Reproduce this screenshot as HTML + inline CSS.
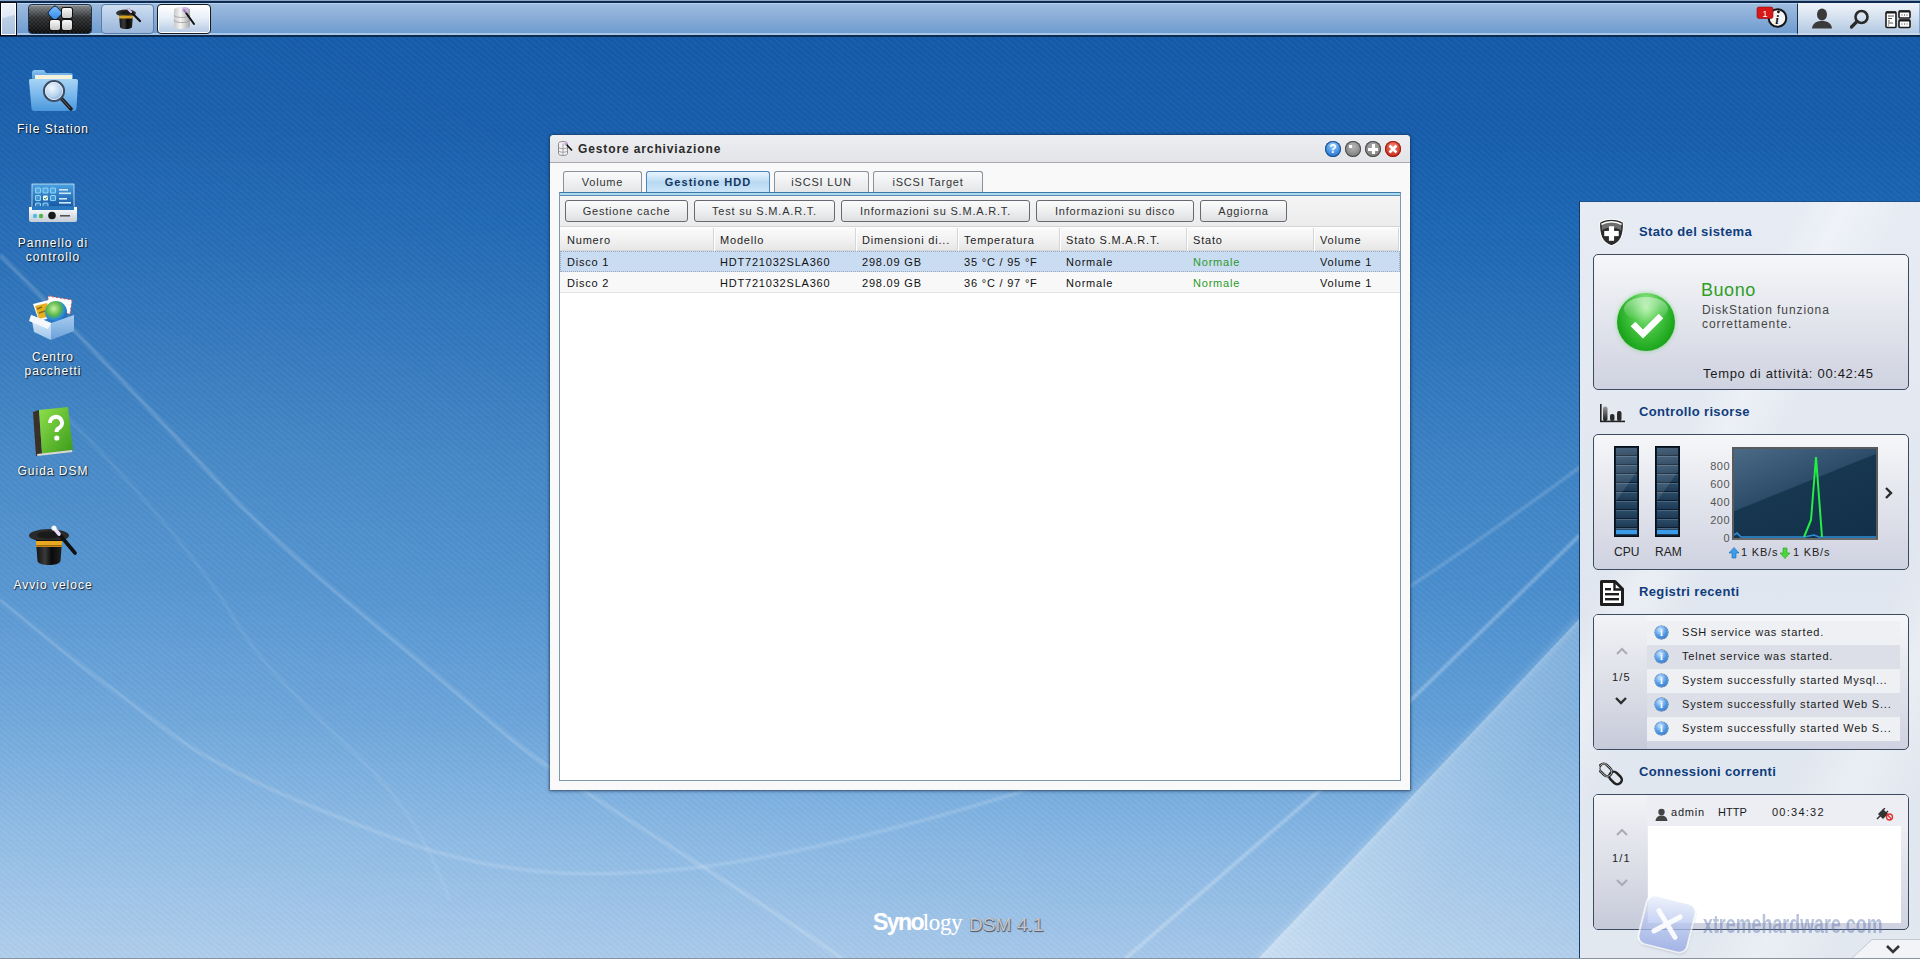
<!DOCTYPE html>
<html><head><meta charset="utf-8">
<style>
*{margin:0;padding:0;box-sizing:border-box}
html,body{width:1920px;height:959px;overflow:hidden;font-family:"Liberation Sans",sans-serif}
body{position:relative;background:#1155a5}
.a{position:absolute}
#bg{position:absolute;left:0;top:0;width:1920px;height:959px;
background:linear-gradient(180deg,#13599f 0px,#135aa9 36px,#165dac 130px,#1c66b3 220px,#2a72ba 330px,#3c82c4 460px,#4a8ece 590px,#63a0d8 720px,#86b6e3 840px,#a6c8ea 959px)}
#stripes{position:absolute;left:0;top:36px;width:1920px;height:923px;
background:repeating-linear-gradient(40deg,rgba(255,255,255,0.024) 0px,rgba(255,255,255,0.024) 2.25px,rgba(0,0,0,0.016) 2.25px,rgba(0,0,0,0.016) 4.5px)}
/* top bar */
#tb{left:0;top:0;width:1920px;height:37px;background:#0d2a50}
#tb0{left:0;top:0;width:1920px;height:1px;background:#8da3c3}
#tbm{left:0;top:3px;width:1920px;height:32px;border-top:1px solid #b8d4f0;border-bottom:2px solid #a8c8ea;
background:linear-gradient(180deg,#9dbcdf 0%,#88acd7 50%,#6e9cd0 100%)}
#tbl{left:0;top:2px;width:17px;height:34px;background:#050a14;padding:1px}
#tbl div{width:15px;height:32px;border:1.5px solid #fff;background:linear-gradient(165deg,#eef3fa 0%,#e2eaf6 40%,#bccfe6 45%,#a9c1de 100%)}
#mm{left:28px;top:4px;width:64px;height:30px;border-radius:4px;border:1px solid #1f344f;
background:linear-gradient(180deg,rgba(130,130,130,.9) 0%,rgba(40,40,40,.95) 45%,#0a0a0a 100%);
box-shadow:inset 0 1px 0 rgba(255,255,255,.25)}
#mm .ck{position:absolute;left:0;top:0;right:0;bottom:0;border-radius:3px;
background-image:linear-gradient(45deg,rgba(255,255,255,.08) 25%,transparent 25%,transparent 75%,rgba(255,255,255,.08) 75%),linear-gradient(45deg,rgba(255,255,255,.08) 25%,transparent 25%,transparent 75%,rgba(255,255,255,.08) 75%);
background-size:4px 4px;background-position:0 0,2px 2px}
.tile{position:absolute;width:10px;height:10px;border-radius:2px;background:linear-gradient(180deg,#fafafa,#c8c8c8);box-shadow:0 0 0 1px #111}
.tbtn{top:4px;height:30px;border-radius:4px;border:1px solid #5a7ca6;
background:linear-gradient(180deg,#cfdff1 0%,#b3cae6 50%,#9ab6da 100%)}
#tr{left:1797px;top:3px;width:122px;height:32px;border-left:1px solid #1a2f4f;border-top:1px solid #f0f4fa;border-bottom:2px solid #c8d8ec;
background:linear-gradient(180deg,#eef2f8 0%,#d2dfee 50%,#b3c9e3 100%)}

.t{position:absolute;white-space:nowrap;font-size:11px;line-height:11px;letter-spacing:.8px;color:#222}
#win{left:550px;top:135px;width:860px;height:655px;background:#f9f9f9;border-radius:4px 4px 0 0;
box-shadow:0 0 2px 1px rgba(30,50,80,.55),0 1px 4px rgba(20,40,70,.35)}
#wtitle{left:0;top:0;width:860px;height:28px;border-radius:4px 4px 0 0;border-bottom:1px solid #a9abae;
background:linear-gradient(180deg,#eceef1 0%,#e2e4e7 100%)}
.wb{position:absolute;top:6px;width:16px;height:16px;border-radius:50%}
.tab{position:absolute;top:36px;height:21px;border:1px solid #8a9199;border-bottom:none;border-radius:3px 3px 0 0;
background:linear-gradient(180deg,#fbfbfc 0%,#eceef0 60%,#e4e6e8 100%)}
.tab .t{top:5px;width:100%;text-align:center;color:#333}
#panel{left:9px;top:57px;width:842px;height:589px;border:1px solid #7e99ad;border-top:1px solid #3d78a6;background:#fff}
#pstrip{left:0;top:0;width:840px;height:3px;background:#a9dbf0;border-bottom:1px solid #5b8db3}
#tbar{left:0;top:3px;width:840px;height:31px;background:linear-gradient(180deg,#f4f4f4,#ececec);border-bottom:1px solid #d4d4d4}
.btn{position:absolute;top:4px;height:22px;border:1px solid #666a70;border-radius:3px;
background:linear-gradient(180deg,#fbfbfb 0%,#eeeff0 50%,#dfe0e2 100%)}
.btn .t{top:5px;width:100%;text-align:center;color:#333}
#ghead{left:0;top:35px;width:840px;height:23px;background:linear-gradient(180deg,#fbfbfb 0%,#f0f0f0 60%,#e6e6e6 100%);border-bottom:1px solid #d9d9d9}
.gsep{position:absolute;top:0;width:1px;height:23px;background:#d6d6d6;box-shadow:1px 0 0 #fff}
.row{position:absolute;left:0;width:840px;height:21px}

#wp{left:1579px;top:201px;width:341px;height:758px;border-left:1px solid #173a66;border-top:1px solid #1d4f8a;
background:linear-gradient(118deg,rgba(255,255,255,0) 30%,rgba(255,255,255,.35) 36%,rgba(255,255,255,0) 44%,rgba(255,255,255,0) 70%,rgba(255,255,255,.3) 78%,rgba(255,255,255,0) 88%),linear-gradient(180deg,#e7ecf4 0%,#e0e6ef 50%,#e2e8f0 100%)}
.wh{position:absolute;left:59px;font-size:13px;line-height:13px;font-weight:bold;color:#0f3c7c;letter-spacing:.36px;white-space:nowrap}
.wbox{position:absolute;left:13px;width:316px;height:136px;border:1px solid #3c4b60;border-radius:5px;
background:linear-gradient(180deg,#f6f7f9 0%,#e6e8ef 40%,#cfd2e0 100%);overflow:hidden}
.bar{position:absolute;top:11px;width:25px;height:91px;background:#0c1d2e;border:1px solid #080f18}
.bar .in{position:absolute;left:1px;top:1px;width:21px;height:87px;
background:repeating-linear-gradient(180deg,#2a4a66 0px,#1d3a55 7px,#0e1e2e 7px,#0e1e2e 8px,#4a6680 8px,#4a6680 9px)}
.bar .gl{position:absolute;left:1px;top:1px;width:21px;height:87px;background:linear-gradient(125deg,rgba(255,255,255,.14) 0%,rgba(255,255,255,.10) 45%,rgba(255,255,255,0) 46%)}
.bar .lv{position:absolute;left:1px;bottom:2px;width:21px;height:4px;background:#3b9be8}
.lg{position:absolute;height:24px;left:53px;width:253px}
.ico{position:absolute;left:8px;top:5px;width:13px;height:13px;border-radius:50%;
background:radial-gradient(circle at 40% 30%,#cfe6ff 0%,#5aa2ea 45%,#1f63b8 100%);box-shadow:0 0 0 .5px #2f5f9a}
.ico:after{content:"i";position:absolute;left:0;top:1px;width:13px;text-align:center;font:bold 10px/11px "Liberation Serif",serif;color:#fff}
.lg .t{left:35px;top:6px;color:#1a1a1a}

.dl{position:absolute;width:106px;left:0;text-align:center;color:#fff;font-size:12px;line-height:14px;letter-spacing:1px;white-space:nowrap;
text-shadow:1px 1px 1px rgba(0,0,0,.75),0 0 2px rgba(0,0,0,.35)}
</style></head><body>
<div id="bg"></div>
<svg id="bgsvg" class="a" style="left:0;top:0" width="1920" height="959" viewBox="0 0 1920 959">
 <defs>
  <linearGradient id="rdark" x1="0" y1="0" x2="1" y2="0">
   <stop offset="0" stop-color="#0a3a80" stop-opacity="0"/><stop offset=".55" stop-color="#0a3a80" stop-opacity="0.0"/><stop offset="1" stop-color="#0a3a80" stop-opacity="0.22"/>
  </linearGradient>
  <radialGradient id="lglow" cx="0" cy="959" r="1100" gradientUnits="userSpaceOnUse">
   <stop offset="0" stop-color="#ffffff" stop-opacity=".12"/><stop offset="1" stop-color="#ffffff" stop-opacity="0"/>
  </radialGradient>
  <linearGradient id="wedge" x1="1258" y1="959" x2="1520" y2="1140" gradientUnits="userSpaceOnUse">
   <stop offset="0" stop-color="#ffffff" stop-opacity=".4"/><stop offset=".35" stop-color="#ffffff" stop-opacity=".22"/><stop offset="1" stop-color="#ffffff" stop-opacity=".1"/>
  </linearGradient>
  <radialGradient id="rglow" cx="1480" cy="680" r="420" gradientUnits="userSpaceOnUse"><stop offset="0" stop-color="#ffffff" stop-opacity=".12"/><stop offset="1" stop-color="#ffffff" stop-opacity="0"/></radialGradient>
  <filter id="bl1" x="-10%" y="-10%" width="120%" height="120%"><feGaussianBlur stdDeviation="1.2"/></filter>
  <filter id="bl3" x="-10%" y="-10%" width="120%" height="120%"><feGaussianBlur stdDeviation="3"/></filter>
 </defs>
 
 <rect x="0" y="36" width="1920" height="923" fill="url(#lglow)"/>
 <path d="M1258 959L1503 700L1580 618L1920 330V959Z" fill="url(#wedge)"/>
 <g fill="none" stroke="#ffffff" filter="url(#bl1)">
  <path id="arcA" d="M0 255C80 335 160 420 235 500C300 565 370 620 433 673C480 712 515 745 550 768C640 830 760 900 843 959" stroke-opacity=".2" stroke-width="3.2"/>
  <path d="M0 600C35 628 70 658 100 680C135 705 170 735 200 753C240 775 270 790 306 804C350 822 400 842 440 853C480 864 520 871 560 873C610 875 660 872 702 867C810 852 930 820 1017 793C1200 730 1400 600 1580 467" stroke-opacity=".18" stroke-width="3"/>
  <path d="M1125 959L1320 790L1410 701L1580 535" stroke-opacity=".28" stroke-width="3.5"/>
  <path d="M60 410C130 480 200 560 235 620S340 735 377 776S430 850 450 900" stroke-opacity=".1" stroke-width="2.5"/>
 </g>
 <path d="M1258 959L1503 700L1580 618" fill="none" stroke="#ffffff" stroke-opacity=".3" stroke-width="3" filter="url(#bl3)"/>
</svg>
<div id="stripes"></div>

<!-- desktop icons -->
<svg class="a" style="left:28px;top:66px" width="52" height="48" viewBox="0 0 52 48">
 <defs>
  <linearGradient id="fg1" x1="0" y1="0" x2="0" y2="1"><stop offset="0" stop-color="#8cc4f0"/><stop offset="1" stop-color="#3d8fd8"/></linearGradient>
  <linearGradient id="fg2" x1="0" y1="0" x2="0" y2="1"><stop offset="0" stop-color="#a8d4f6"/><stop offset=".5" stop-color="#7ab8ec"/><stop offset="1" stop-color="#4a98dc"/></linearGradient>
  <radialGradient id="lens" cx=".4" cy=".35" r=".7"><stop offset="0" stop-color="#f4f8ff"/><stop offset=".6" stop-color="#b8d4ee"/><stop offset="1" stop-color="#6d9bc8"/></radialGradient>
 </defs>
 <path d="M6 4h10l2 3h24a3 3 0 0 1 3 3v6H4V7a3 3 0 0 1 2-3z" fill="url(#fg1)"/>
 <rect x="7" y="9" width="37" height="6" fill="#f4f1dc"/>
 <path d="M2 13h46a2 2 0 0 1 2 2l-1.5 27a3 3 0 0 1-3 3H6.5a3 3 0 0 1-3-3L1 15a2 2 0 0 1 1-2z" fill="url(#fg2)"/>
 <path d="M33 32l10 11" stroke="#1b1b1b" stroke-width="3.6" stroke-linecap="round"/>
 <path d="M33 32l9 10" stroke="#6a6a6a" stroke-width="1" stroke-linecap="round"/>
 <circle cx="26" cy="25" r="10" fill="url(#lens)" stroke="#3c4f66" stroke-width="2.2"/>
 <circle cx="26" cy="25" r="8.5" fill="none" stroke="#e8eef6" stroke-width="1"/>
</svg>
<div class="dl" style="top:122px">File Station</div>

<svg class="a" style="left:28px;top:183px" width="50" height="40" viewBox="0 0 50 40">
 <defs>
  <linearGradient id="pg1" x1="0" y1="0" x2="0" y2="1"><stop offset="0" stop-color="#4aa2e2"/><stop offset=".6" stop-color="#1f66b0"/><stop offset="1" stop-color="#0e3f7e"/></linearGradient>
  <linearGradient id="pg2" x1="0" y1="0" x2="0" y2="1"><stop offset="0" stop-color="#ffffff"/><stop offset="1" stop-color="#c4ccd6"/></linearGradient>
 </defs>
 <rect x="4" y="1" width="42" height="31" fill="url(#pg1)" stroke="#cfe6f8" stroke-width=".8"/>
 <g fill="rgba(120,210,250,.35)" stroke="#8fd4f6" stroke-width="1.1">
  <rect x="7.5" y="5" width="5" height="5" rx="1"/><rect x="15" y="5" width="5" height="5" rx="1"/><rect x="22.5" y="5" width="5" height="5" rx="1"/>
  <rect x="7.5" y="12.5" width="5" height="5" rx="1"/><rect x="22.5" y="12.5" width="5" height="5" rx="1"/>
  <rect x="7.5" y="20" width="5" height="5" rx="1"/><rect x="15" y="20" width="5" height="5" rx="1"/>
 </g>
 <rect x="15" y="12.5" width="5" height="5" rx="1" fill="#e8f4fc"/>
 <path d="M16 15l1.3 1.3 2-2.5" stroke="#2a9a3a" stroke-width="1" fill="none"/>
 <g fill="#cfe8f8"><rect x="31" y="6" width="9" height="1.6"/><rect x="31" y="9.5" width="12" height="1.6"/><rect x="31" y="15" width="8" height="1.6"/><rect x="31" y="19" width="12" height="1.6"/><rect x="31" y="23" width="9" height="1.6"/></g>
 <path d="M1 24h48v13a2 2 0 0 1-2 2H3a2 2 0 0 1-2-2z" fill="url(#pg2)"/>
 <rect x="4" y="23" width="42" height="4" fill="#2a78c0"/>
 <circle cx="7" cy="33" r="2.2" fill="#5ab8e8"/><circle cx="13" cy="33" r="2.2" fill="#4cb848"/>
 <circle cx="24" cy="32.5" r="3.8" fill="#1a1a1a"/>
 <rect x="32" y="32" width="10" height="1.6" fill="#555"/>
</svg>
<div class="dl" style="top:236px">Pannello di<br>controllo</div>

<svg class="a" style="left:29px;top:293px" width="48" height="48" viewBox="0 0 48 48">
 <defs>
  <radialGradient id="globe" cx=".4" cy=".35" r=".7"><stop offset="0" stop-color="#c8f0a0"/><stop offset=".45" stop-color="#5ab84a"/><stop offset=".7" stop-color="#2a8ad8"/><stop offset="1" stop-color="#1a5aa8"/></radialGradient>
  <linearGradient id="box1" x1="0" y1="0" x2="0" y2="1"><stop offset="0" stop-color="#e8f2fc"/><stop offset="1" stop-color="#9cc4ea"/></linearGradient>
  <linearGradient id="box2" x1="0" y1="0" x2="0" y2="1"><stop offset="0" stop-color="#a8cdf0"/><stop offset="1" stop-color="#6aa0d8"/></linearGradient>
 </defs>
 <path d="M19 3l24 4-2 14-22-3z" fill="#fff" stroke="#e05050" stroke-width="1" stroke-dasharray="2 2"/>
 <path d="M4 11l16-4 5 17-15 4z" fill="#fff"/>
 <path d="M6 13l12-3 4 13-12 3z" fill="#e8b020"/>
 <path d="M8 16l5-2M10 20l6-2" stroke="#8a6a10" stroke-width="1.5"/>
 <circle cx="27" cy="19" r="11" fill="url(#globe)"/>
 <path d="M2 22l20 8v17L5 39z" fill="url(#box1)"/>
 <path d="M22 30l23-8v16l-23 9z" fill="url(#box2)"/>
 <path d="M2 22l20 8-3 6L0 28z" fill="#f4f8fc"/>
</svg>
<div class="dl" style="top:350px">Centro<br>pacchetti</div>

<svg class="a" style="left:31px;top:406px" width="44" height="50" viewBox="0 0 44 50">
 <defs><linearGradient id="bk" x1="0" y1="0" x2="1" y2="1"><stop offset="0" stop-color="#8ee04a"/><stop offset="1" stop-color="#3a9a1a"/></linearGradient></defs>
 <path d="M2 6l6-2 3 44-6 2z" fill="#3a3028"/>
 <path d="M8 4l29-3 5 43-31 4z" fill="url(#bk)"/>
 <path d="M6 48l35-4 .5 2L6.5 50z" fill="#d8d8d0"/>
 <path d="M19 17a6 6 0 1 1 9 5c-2 1-2.5 2-2.5 4" fill="none" stroke="#fff" stroke-width="4"/>
 <circle cx="25.8" cy="32" r="2.6" fill="#fff"/>
</svg>
<div class="dl" style="top:464px">Guida DSM</div>

<svg class="a" style="left:28px;top:525px" width="50" height="42" viewBox="0 0 50 42">
 <defs>
  <linearGradient id="hat" x1="0" y1="0" x2="1" y2="0"><stop offset="0" stop-color="#111"/><stop offset=".35" stop-color="#3a3a3a"/><stop offset=".6" stop-color="#0a0a0a"/><stop offset="1" stop-color="#222"/></linearGradient>
 </defs>
 <ellipse cx="21" cy="10.5" rx="20" ry="6.5" fill="#2a2a2a"/>
 <ellipse cx="21" cy="10" rx="12" ry="3.5" fill="#1a1a1a"/>
 <path d="M8 15h26v2H8z" fill="#111"/>
 <path d="M8 16h26l-1.5 20c-1 3-6 4-11.5 4s-10.5-1-11.5-4z" fill="url(#hat)"/>
 <rect x="8" y="16" width="26" height="6" fill="#e8a820"/>
 <rect x="8" y="20" width="26" height="1.5" fill="#a06a10"/>
 <path d="M26 3l21 25" stroke="#111" stroke-width="3.6" stroke-linecap="round"/>
 <path d="M26 3l5 6" stroke="#e8e0f8" stroke-width="3.6" stroke-linecap="round"/>
 <circle cx="26" cy="3" r="2.6" fill="#fff" opacity=".85"/>
</svg>
<div class="dl" style="top:578px">Avvio veloce</div>
<div id="tb" class="a"></div>
<div id="tb0" class="a"></div>
<div id="tbm" class="a"></div>
<div id="tbl" class="a"><div></div></div>
<div id="mm" class="a"><div class="ck"></div>
  <div class="tile" style="left:21px;top:3px;width:10px;height:10px;transform:rotate(45deg);background:linear-gradient(135deg,#7cc0ff,#2f86e8);box-shadow:0 0 0 1px #0c2a55"></div>
  <div class="tile" style="left:33px;top:3px"></div>
  <div class="tile" style="left:21px;top:15px"></div>
  <div class="tile" style="left:33px;top:15px"></div>
</div>
<div class="a tbtn" style="left:101px;width:53px"></div>
<div class="a tbtn" style="left:157px;width:54px;border:1.5px solid #161a22;box-shadow:inset 0 0 0 1px #fff;background:linear-gradient(180deg,#ffffff 0%,#e8eff8 45%,#b5cae4 100%)"></div>
<div id="tr" class="a"></div>

<div id="win" class="a">
 <div id="wtitle" class="a">
  <svg class="a" style="left:7px;top:5px" width="18" height="17" viewBox="0 0 18 17">
   <path d="M1.5 3.5c0-1.2 2-2 4.5-2s4.5.8 4.5 2v10c0 1.2-2 2-4.5 2s-4.5-.8-4.5-2z" fill="#f2f2f2" stroke="#8a8a8a" stroke-width="1"/>
   <path d="M1.5 7c0 1 2 1.7 4.5 1.7S10.5 8 10.5 7M1.5 10.5c0 1 2 1.7 4.5 1.7s4.5-.7 4.5-1.7M6 3.5v12" fill="none" stroke="#9a9a9a" stroke-width=".9"/>
   <path d="M8.5 3.5l6.5 7" stroke="#111" stroke-width="1.6"/>
   <circle cx="8.5" cy="3.5" r="2" fill="#e0b0f8" opacity=".7"/>
  </svg>
  <div class="t" style="left:28px;top:9px;font-weight:bold;font-size:12px;letter-spacing:.88px;color:#2a2a2a">Gestore archiviazione</div>
  <div class="wb" style="left:775px;background:radial-gradient(circle at 50% 30%,#9fd0ff 0%,#3f8ee0 55%,#1a5aa8 100%);box-shadow:inset 0 0 0 1px #1c4f8a"><div class="t" style="left:0;top:3px;width:16px;text-align:center;color:#fff;font-weight:bold;font-size:12px;letter-spacing:0">?</div></div>
  <div class="wb" style="left:795px;background:radial-gradient(circle at 50% 35%,#b8b8b8 0%,#8a8a8a 60%,#5a5a5a 100%);box-shadow:inset 0 0 0 1px #4a4a4a"><div class="a" style="left:4px;top:4px;width:3px;height:3px;background:#fff"></div></div>
  <div class="wb" style="left:815px;background:radial-gradient(circle at 50% 35%,#b0b0b0 0%,#888 60%,#555 100%);box-shadow:inset 0 0 0 1px #4a4a4a">
   <div class="a" style="left:3px;top:6.5px;width:10px;height:3px;background:#fff"></div><div class="a" style="left:6.5px;top:3px;width:3px;height:10px;background:#fff"></div></div>
  <div class="wb" style="left:835px;background:radial-gradient(circle at 50% 35%,#f08a7a 0%,#d23a2a 60%,#a81a10 100%);box-shadow:inset 0 0 0 1px #9a1a10">
   <svg class="a" style="left:0;top:0" width="16" height="16"><path d="M4.5 4.5l7 7M11.5 4.5l-7 7" stroke="#fff" stroke-width="2.6"/></svg></div>
 </div>
 <div class="tab" style="left:13px;width:79px"><div class="t">Volume</div></div>
 <div class="tab" style="left:96px;width:124px;border-color:#4a86b8;background:linear-gradient(180deg,#eaf4fc 0%,#b9d9f3 50%,#cfe6f8 100%);height:22px"><div class="t" style="font-weight:bold;letter-spacing:1.05px;color:#15375e">Gestione HDD</div></div>
 <div class="tab" style="left:224px;width:95px"><div class="t">iSCSI LUN</div></div>
 <div class="tab" style="left:323px;width:110px"><div class="t">iSCSI Target</div></div>
 <div id="panel" class="a">
  <div id="pstrip" class="a"></div>
  <div id="tbar" class="a">
   <div class="btn" style="left:5px;width:123px"><div class="t">Gestione cache</div></div>
   <div class="btn" style="left:134px;width:141px"><div class="t">Test su S.M.A.R.T.</div></div>
   <div class="btn" style="left:281px;width:189px"><div class="t">Informazioni su S.M.A.R.T.</div></div>
   <div class="btn" style="left:476px;width:158px"><div class="t">Informazioni su disco</div></div>
   <div class="btn" style="left:640px;width:87px"><div class="t">Aggiorna</div></div>
  </div>
  <div id="ghead" class="a">
   <div class="t" style="left:7px;top:7px">Numero</div>
   <div class="gsep" style="left:153px"></div>
   <div class="t" style="left:160px;top:7px">Modello</div>
   <div class="gsep" style="left:295px"></div>
   <div class="t" style="left:302px;top:7px">Dimensioni di...</div>
   <div class="gsep" style="left:397px"></div>
   <div class="t" style="left:404px;top:7px">Temperatura</div>
   <div class="gsep" style="left:499px"></div>
   <div class="t" style="left:506px;top:7px">Stato S.M.A.R.T.</div>
   <div class="gsep" style="left:626px"></div>
   <div class="t" style="left:633px;top:7px">Stato</div>
   <div class="gsep" style="left:753px"></div>
   <div class="t" style="left:760px;top:7px">Volume</div>
   <div class="gsep" style="left:838px"></div>
  </div>
  <div class="row" style="top:58px;background:#cadcf2;border:1px dotted #9aa8b8"></div>
  <div class="row" style="top:79px;background:#f8f8f8;border-bottom:1px solid #e4e4e4"></div>
  <div class="t" style="left:7px;top:64px;color:#111">Disco 1</div>
  <div class="t" style="left:160px;top:64px;color:#111">HDT721032SLA360</div>
  <div class="t" style="left:302px;top:64px;color:#111">298.09 GB</div>
  <div class="t" style="left:404px;top:64px;color:#111">35 °C / 95 °F</div>
  <div class="t" style="left:506px;top:64px;color:#111">Normale</div>
  <div class="t" style="left:633px;top:64px;color:#2a9a2a">Normale</div>
  <div class="t" style="left:760px;top:64px;color:#111">Volume 1</div>
  <div class="t" style="left:7px;top:85px;color:#111">Disco 2</div>
  <div class="t" style="left:160px;top:85px;color:#111">HDT721032SLA360</div>
  <div class="t" style="left:302px;top:85px;color:#111">298.09 GB</div>
  <div class="t" style="left:404px;top:85px;color:#111">36 °C / 97 °F</div>
  <div class="t" style="left:506px;top:85px;color:#111">Normale</div>
  <div class="t" style="left:633px;top:85px;color:#2a9a2a">Normale</div>
  <div class="t" style="left:760px;top:85px;color:#111">Volume 1</div>
 </div>
</div>

<div id="wp" class="a">
 <!-- Stato del sistema -->
 <svg class="a" style="left:18px;top:16px" width="27" height="29" viewBox="0 0 26 28">
  <path d="M13 1.2C8 1.2 4 2.6 1.5 4.3C1.2 16 3.5 23.5 13 26.8C22.5 23.5 24.8 16 24.5 4.3C22 2.6 18 1.2 13 1.2Z" fill="#2c2c2c" stroke="#fff" stroke-width="1"/>
  <path d="M3.5 6C6 4.3 9.5 3.4 13 3.4S20 4.3 22.5 6L22.3 12C19 10 16 9.5 13 9.5S6 10 3.7 12Z" fill="#8a8a8a" opacity=".7"/>
  <path d="M3.2 6.2C6 4.4 9.5 3.6 13 3.6S20 4.4 22.8 6.2" fill="none" stroke="#fff" stroke-width="1.4"/>
  <rect x="10.5" y="8" width="5" height="14" fill="#fff"/><rect x="6" y="12.5" width="14" height="5" fill="#fff"/>
 </svg>
 <div class="wh" style="top:23px">Stato del sistema</div>
 <div class="wbox" style="top:52px">
  <div class="a" style="left:22px;top:37px;width:60px;height:60px;border-radius:50%;background:radial-gradient(circle at 50% 50%,rgba(120,230,120,.35) 0%,rgba(120,230,120,0) 70%)"></div>
  <div class="a" style="left:23px;top:38px;width:58px;height:58px;border-radius:50%;
   background:radial-gradient(ellipse at 50% 25%,#a8f0a0 0%,#4cc848 35%,#1ea81e 70%,#138a13 100%);box-shadow:0 0 4px rgba(60,200,60,.5)"></div>
  <div class="a" style="left:30px;top:42px;width:44px;height:24px;border-radius:50%;background:linear-gradient(180deg,rgba(255,255,255,.45),rgba(255,255,255,0))"></div>
  <svg class="a" style="left:23px;top:38px" width="58" height="58"><path d="M16 31l10 10 18-18" fill="none" stroke="#fff" stroke-width="6.5"/></svg>
  <div class="t" style="left:107px;top:26px;font-size:18px;line-height:18px;color:#2e9e26;letter-spacing:.55px">Buono</div>
  <div class="t" style="left:108px;top:49px;font-size:12px;line-height:12px;color:#454545;letter-spacing:.92px">DiskStation funziona</div>
  <div class="t" style="left:108px;top:63px;font-size:12px;line-height:12px;color:#454545;letter-spacing:.92px">correttamente.</div>
  <div class="t" style="left:109px;top:112px;font-size:13px;line-height:13px;color:#1c1c1c;letter-spacing:.7px">Tempo di attività: 00:42:45</div>
 </div>
 <!-- Controllo risorse -->
 <svg class="a" style="left:19px;top:201px" width="27" height="20" viewBox="0 0 27 20">
  <defs><linearGradient id="cg" x1="0" y1="0" x2="0" y2="1"><stop offset="0" stop-color="#9a9a9a"/><stop offset="1" stop-color="#1a1a1a"/></linearGradient></defs>
  <rect x="1" y="1" width="1.6" height="18" fill="#222"/><rect x="1" y="17.6" width="25" height="1.6" fill="#222"/>
  <rect x="4" y="3.5" width="4.5" height="14.5" rx="2" fill="url(#cg)"/>
  <rect x="11" y="11" width="4.5" height="7" rx="2" fill="#2a2a2a"/>
  <rect x="18" y="8" width="4.5" height="10" rx="2" fill="#2a2a2a"/>
 </svg>
 <div class="wh" style="top:203px">Controllo risorse</div>
 <div class="wbox" style="top:232px">
  <div class="bar" style="left:20px"><div class="in"></div><div class="gl"></div><div class="lv"></div></div>
  <div class="bar" style="left:61px"><div class="in"></div><div class="gl"></div><div class="lv"></div></div>
  <div class="t" style="left:20px;top:111px;font-size:12px;line-height:12px;letter-spacing:0;color:#222">CPU</div>
  <div class="t" style="left:61px;top:111px;font-size:12px;line-height:12px;letter-spacing:0;color:#222">RAM</div>
  <div class="t" style="left:91px;top:26px;width:45px;text-align:right;font-size:11px;line-height:10px;letter-spacing:.5px;color:#555">800</div>
  <div class="t" style="left:91px;top:44px;width:45px;text-align:right;font-size:11px;line-height:10px;letter-spacing:.5px;color:#555">600</div>
  <div class="t" style="left:91px;top:62px;width:45px;text-align:right;font-size:11px;line-height:10px;letter-spacing:.5px;color:#555">400</div>
  <div class="t" style="left:91px;top:80px;width:45px;text-align:right;font-size:11px;line-height:10px;letter-spacing:.5px;color:#555">200</div>
  <div class="t" style="left:91px;top:98px;width:45px;text-align:right;font-size:11px;line-height:10px;letter-spacing:.5px;color:#555">0</div>
  <div class="a" style="left:138px;top:12px;width:146px;height:93px;background:#4a4f55;border:2px solid #5a5a5a;border-bottom-color:#6a6a6a">
   <div class="a" style="left:0;top:0;width:142px;height:89px;background:linear-gradient(158deg,#4a6a86 0%,#2c4c6a 42%,#17364f 43%,#12304a 100%)"></div>
   <svg class="a" style="left:0;top:0" width="142" height="89">
    <path d="M0 86 L3 84 L7 88 L10 88 L70 88 L75 87 L80 86 L85 88 L142 88" fill="none" stroke="#2e8fd8" stroke-width="1.6"/>
    <path d="M70 88 L77 71 L82 8 L88 88" fill="none" stroke="#22ee44" stroke-width="2"/>
   </svg>
  </div>
  <svg class="a" style="left:290px;top:51px" width="10" height="14"><path d="M2 2l5 5-5 5" fill="none" stroke="#2a2a2a" stroke-width="2.4"/></svg>
  <svg class="a" style="left:134px;top:112px" width="12" height="12"><path d="M6 0.5L11 6H8V11H4V6H1Z" fill="#3a9ee8" stroke="#1c6ab0" stroke-width=".6"/></svg>
  <div class="t" style="left:147px;top:112px;font-size:11px;letter-spacing:.8px;color:#222">1 KB/s</div>
  <svg class="a" style="left:185px;top:112px" width="12" height="12"><path d="M6 11.5L11 6H8V1H4V6H1Z" fill="#4ad838" stroke="#24a020" stroke-width=".6"/></svg>
  <div class="t" style="left:199px;top:112px;font-size:11px;letter-spacing:.8px;color:#222">1 KB/s</div>
 </div>
 <!-- Registri recenti -->
 <svg class="a" style="left:19px;top:377px" width="26" height="28" viewBox="0 0 26 28">
  <path d="M2.5 2.5H16L23.5 10V25.5H2.5Z" fill="#fff" stroke="#1e1e1e" stroke-width="3" stroke-linejoin="round"/>
  <path d="M15.5 2.5V10.5H23.5" fill="none" stroke="#1e1e1e" stroke-width="2.4"/>
  <rect x="6" y="9" width="6" height="2.4" fill="#1e1e1e"/><rect x="6" y="14" width="14" height="2.4" fill="#1e1e1e"/><rect x="6" y="19" width="14" height="2.4" fill="#1e1e1e"/>
 </svg>
 <div class="wh" style="top:383px">Registri recenti</div>
 <div class="wbox" style="top:412px">
  <div class="a" style="left:0;top:0;width:53px;height:136px;background:linear-gradient(180deg,#f2f3f6 0%,#d9dbe5 60%,#c6c9d9 100%)"></div>
  <svg class="a" style="left:21px;top:32px" width="14" height="9"><path d="M2 7l5-5 5 5" fill="none" stroke="#a9acb4" stroke-width="2"/></svg>
  <div class="t" style="left:18px;top:57px;color:#222;letter-spacing:1.2px">1/5</div>
  <svg class="a" style="left:20px;top:81px" width="14" height="9"><path d="M2 2l5 5 5-5" fill="none" stroke="#2e2e2e" stroke-width="2.4"/></svg>
  <div class="lg" style="top:6px;background:#eef0f4"><div class="ico"></div><div class="t">SSH service was started.</div></div>
  <div class="lg" style="top:30px;background:#dcdfe7"><div class="ico"></div><div class="t">Telnet service was started.</div></div>
  <div class="lg" style="top:54px;background:#eef0f4"><div class="ico"></div><div class="t">System successfully started Mysql...</div></div>
  <div class="lg" style="top:78px;background:#dcdfe7"><div class="ico"></div><div class="t">System successfully started Web S...</div></div>
  <div class="lg" style="top:102px;background:#eef0f4"><div class="ico"></div><div class="t">System successfully started Web S...</div></div>
 </div>
 <!-- Connessioni correnti -->
 <svg class="a" style="left:19px;top:558px" width="26" height="28" viewBox="0 0 26 28">
  <g fill="none" stroke="#222" stroke-width="2.6"><rect x="2" y="3" width="9" height="14" rx="4.5" transform="rotate(-45 6.5 10)"/><rect x="12" y="11" width="9" height="14" rx="4.5" transform="rotate(-45 16.5 18)"/></g>
  <g fill="none" stroke="#fff" stroke-width=".8" opacity=".8"><rect x="2" y="3" width="9" height="14" rx="4.5" transform="rotate(-45 6.5 10)"/></g>
 </svg>
 <div class="wh" style="top:563px">Connessioni correnti</div>
 <div class="wbox" style="top:592px">
  <div class="a" style="left:0;top:0;width:53px;height:136px;background:linear-gradient(180deg,#f2f3f6 0%,#d9dbe5 60%,#c6c9d9 100%)"></div>
  <div class="a" style="left:53px;top:0;width:263px;height:31px;background:#eceef3"></div>
  <div class="a" style="left:54px;top:31px;width:253px;height:97px;background:#fff"></div>
  <svg class="a" style="left:21px;top:33px" width="14" height="9"><path d="M2 7l5-5 5 5" fill="none" stroke="#a9acb4" stroke-width="2"/></svg>
  <div class="t" style="left:18px;top:58px;color:#222;letter-spacing:1.2px">1/1</div>
  <svg class="a" style="left:21px;top:83px" width="14" height="9"><path d="M2 2l5 5 5-5" fill="none" stroke="#a9acb4" stroke-width="2"/></svg>
  <svg class="a" style="left:61px;top:13px" width="13" height="13" viewBox="0 0 13 13"><circle cx="6.5" cy="4" r="3.2" fill="#444"/><path d="M0.5 13C1 9 3.5 7.5 6.5 7.5S12 9 12.5 13Z" fill="#444"/></svg>
  <div class="t" style="left:77px;top:12px;color:#1a1a1a">admin</div>
  <div class="t" style="left:124px;top:12px;color:#1a1a1a;letter-spacing:0">HTTP</div>
  <div class="t" style="left:178px;top:12px;color:#1a1a1a;letter-spacing:1.25px">00:34:32</div>
  <svg class="a" style="left:282px;top:13px" width="18" height="13" viewBox="0 0 18 13"><path d="M1 11l3-3M3 6l4-4 4 4-4 4Z" fill="#333" stroke="#333" stroke-width="1.5"/><path d="M7 2l2-2M10 5l2-2" stroke="#333" stroke-width="1.3"/><circle cx="13.5" cy="9" r="3" fill="none" stroke="#e03030" stroke-width="1.3"/><path d="M11.5 7l4 4" stroke="#e03030" stroke-width="1.2"/></svg>
 </div>
 <!-- bottom tab -->
 <svg class="a" style="left:0;top:736px" width="341" height="22" viewBox="0 0 341 22">
  <path d="M270 22L292 1.5H341V22Z" fill="#f2f4f8" stroke="none"/>
  <path d="M270 22L292 1.5H341" fill="none" stroke="#c4c8d0" stroke-width="1"/>
  <path d="M307 8l6 6 6-6" fill="none" stroke="#333" stroke-width="2.6"/>
 </svg>
 <div class="a" style="left:0;top:756px;width:341px;height:2px;background:#8a94a4"></div>
</div>

<!-- taskbar icons -->
<svg class="a" style="left:114px;top:7px" width="28" height="24" viewBox="0 0 28 24">
 <defs><linearGradient id="hat2" x1="0" y1="0" x2="1" y2="0"><stop offset="0" stop-color="#111"/><stop offset=".35" stop-color="#3a3a3a"/><stop offset=".6" stop-color="#0a0a0a"/><stop offset="1" stop-color="#222"/></linearGradient></defs>
 <ellipse cx="12" cy="6" rx="10" ry="3.6" fill="#333"/>
 <ellipse cx="12" cy="5.6" rx="6" ry="2" fill="#1a1a1a"/>
 <path d="M5 8h14l-1 12c-.5 1.5-3 2-6 2s-5.5-.5-6-2z" fill="url(#hat2)"/>
 <rect x="5" y="8.5" width="14" height="3" fill="#d8a020"/>
 <path d="M14 2l12 12" stroke="#111" stroke-width="2.2" stroke-linecap="round"/>
 <path d="M14 2l3 3" stroke="#d8c8f0" stroke-width="2.2" stroke-linecap="round"/>
</svg>
<svg class="a" style="left:170px;top:6px" width="30" height="24" viewBox="0 0 30 24">
 <defs><linearGradient id="cyl" x1="0" y1="0" x2="1" y2="0"><stop offset="0" stop-color="#c8c8c8"/><stop offset=".4" stop-color="#f4f4f4"/><stop offset="1" stop-color="#a8a8a8"/></linearGradient></defs>
 <path d="M4 4c0-2 4-3 8-3s8 1 8 3v16c0 2-4 3-8 3s-8-1-8-3z" fill="url(#cyl)"/>
 <path d="M4 9c0 1.5 4 2.5 8 2.5s8-1 8-2.5M4 14c0 1.5 4 2.5 8 2.5s8-1 8-2.5" fill="none" stroke="#999" stroke-width=".8"/>
 <path d="M14 4l10 14" stroke="#111" stroke-width="2" stroke-linecap="round"/>
 <circle cx="15" cy="4" r="3" fill="#d0a8f0" opacity=".7"/>
</svg>
<!-- notification -->
<svg class="a" style="left:1755px;top:5px" width="34" height="26" viewBox="0 0 34 26">
 <circle cx="22.5" cy="13" r="8.8" fill="#f4f4f4" stroke="#151515" stroke-width="2"/>
 <path d="M23.5 5.5a1.4 1.4 0 1 1-.1 0z" fill="#111"/>
 <text x="22" y="19" font-family="Liberation Serif" font-style="italic" font-weight="bold" font-size="13" fill="#111" text-anchor="middle">i</text>
 <rect x="2" y="2" width="16" height="11.5" rx="2" fill="#d81818" stroke="#8a0a0a" stroke-width=".6"/>
 <text x="10" y="11.5" font-family="Liberation Sans" font-size="9" fill="#fff" text-anchor="middle">1</text>
</svg>
<!-- user -->
<svg class="a" style="left:1811px;top:8px" width="22" height="21" viewBox="0 0 22 21">
 <ellipse cx="11" cy="6.5" rx="5" ry="6" fill="#3a3a3a"/>
 <path d="M1 20.5C1.5 15.5 5 13 11 13S20.5 15.5 21 20.5Z" fill="#3a3a3a"/>
</svg>
<!-- search -->
<svg class="a" style="left:1849px;top:9px" width="21" height="21" viewBox="0 0 21 21">
 <circle cx="12.5" cy="8" r="6" fill="none" stroke="#2a2a2a" stroke-width="2.6"/>
 <path d="M8 12.5L2.5 18" stroke="#2a2a2a" stroke-width="3.2" stroke-linecap="round"/>
</svg>
<!-- widgets -->
<svg class="a" style="left:1885px;top:10px" width="26" height="19" viewBox="0 0 26 19">
 <rect x="1" y="2" width="10" height="15.5" rx="1" fill="#fff" stroke="#1a1a1a" stroke-width="1.6"/>
 <rect x="1" y="1.5" width="10" height="2" fill="#1a1a1a"/>
 <path d="M3 6h6M3 8.5h4M3 11h2M3 13h5M3 15h1" stroke="#444" stroke-width=".9"/>
 <rect x="14" y="1" width="11" height="7" rx="1" fill="#fff" stroke="#1a1a1a" stroke-width="1.6"/>
 <rect x="14" y="0.5" width="11" height="2" fill="#1a1a1a"/>
 <rect x="14" y="10" width="11" height="7.5" rx="1" fill="#fff" stroke="#1a1a1a" stroke-width="1.6"/>
 <rect x="14" y="9.5" width="11" height="2" fill="#1a1a1a"/>
 <path d="M16.5 5h1M19 5h1M21.5 5h1M16.5 14h1M19 14h1M21.5 14h1" stroke="#333" stroke-width="1"/>
</svg>
<!-- logo -->
<div class="a" style="left:873px;top:908px;white-space:nowrap;color:#fff;height:30px;text-shadow:0 0 1px rgba(255,255,255,.4)">
 <span style="font:bold 23px/28px 'Liberation Sans',sans-serif;letter-spacing:-1.6px">Syno</span><span style="font:23px/28px 'Liberation Serif',serif;letter-spacing:-.4px">logy</span>
</div>
<div class="a" style="left:969px;top:914px;white-space:nowrap;font:19px/22px 'Liberation Sans',sans-serif;color:#c4c8ce;letter-spacing:.1px;
 text-shadow:0 1px 0 #59606e,0 -.5px 0 rgba(80,90,105,.6),1px 1px 1px rgba(30,40,60,.6)">DSM 4.1</div>

<!-- watermark -->
<div class="a" style="left:1643px;top:900px;width:48px;height:48px;border-radius:7px;transform:rotate(14deg);
 background:linear-gradient(170deg,rgba(235,240,252,.8) 0%,rgba(185,200,240,.75) 45%,rgba(140,162,225,.75) 100%);
 box-shadow:0 0 0 2px rgba(255,255,255,.75),1px 2px 3px rgba(60,70,110,.35)">
 <svg class="a" style="left:0;top:0" width="48" height="48"><path d="M13 13l22 22M35 14L13 34" stroke="rgba(255,255,255,.9)" stroke-width="5" stroke-linecap="round"/></svg>
</div>
<div class="a" style="left:1703px;top:912px;white-space:nowrap;font:bold 25px/25px 'Liberation Sans',sans-serif;letter-spacing:0px;color:rgba(95,120,175,.45);
 transform:scaleX(.714);transform-origin:0 0">xtremehardware.com</div>
<div class="a" style="left:0;top:958px;width:1920px;height:1px;background:#8893a6"></div>
</body></html>
